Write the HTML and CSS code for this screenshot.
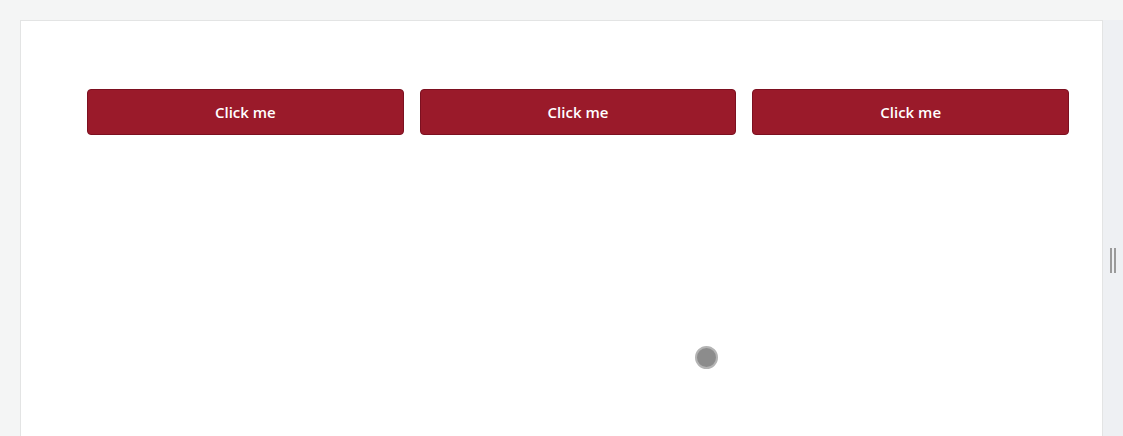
FILE: index.html
```html
<!DOCTYPE html>
<html lang="en">

<head>
    <meta charset="UTF-8">
    <meta name="viewport" content="width=device-width, initial-scale=1.0">
    <title>Buttons</title>
    <link rel="stylesheet" href="styles.css">
</head>

<body>
    <div class="frame">
        <div class="panel">
            <div class="buttons">
                <button class="btn">Click me</button>
                <button class="btn">Click me</button>
                <button class="btn">Click me</button>
            </div>
            <div class="cursor"></div>
        </div>
        <div class="side">
            <span class="grip"></span>
        </div>
    </div>
</body>

</html>
```

FILE: styles.css
```css
* {
    margin: 0;
    padding: 0;
    box-sizing: border-box;
}

body {
    background-color: #f4f5f5;
    font-family: "Open Sans", sans-serif;
    height: 436px;
    overflow: hidden;
}

.frame {
    display: flex;
    height: 100%;
    padding: 20px 0 0 20px;
}

.panel {
    flex-grow: 1;
    position: relative;
    background-color: #fff;
    border: 1px solid #e3e4e4;
    border-bottom: none;
    padding: 68px 33px 0 66px;
}

.buttons {
    display: grid;
    grid-template-columns: repeat(3, 1fr);
    gap: 16px;
}

.btn {
    height: 46px;
    background-color: #9a1a2a;
    border: 1px solid #7c1020;
    border-radius: 4px;
    color: #fff;
    font-family: "Open Sans", sans-serif;
    font-size: 15px;
    font-weight: 600;
}

.cursor {
    position: absolute;
    left: 674px;
    top: 325px;
    width: 23px;
    height: 23px;
    border-radius: 50%;
    background-color: #8c8c8c;
    border: 2px solid #b4b4b4;
}

.side {
    width: 20px;
    flex-shrink: 0;
    background-color: #eef0f3;
    display: flex;
    align-items: center;
    justify-content: center;
    padding-top: 64px;
}

.grip {
    width: 6px;
    height: 25px;
    border-left: 2px solid #9a9a9a;
    border-right: 2px solid #9a9a9a;
}
```
